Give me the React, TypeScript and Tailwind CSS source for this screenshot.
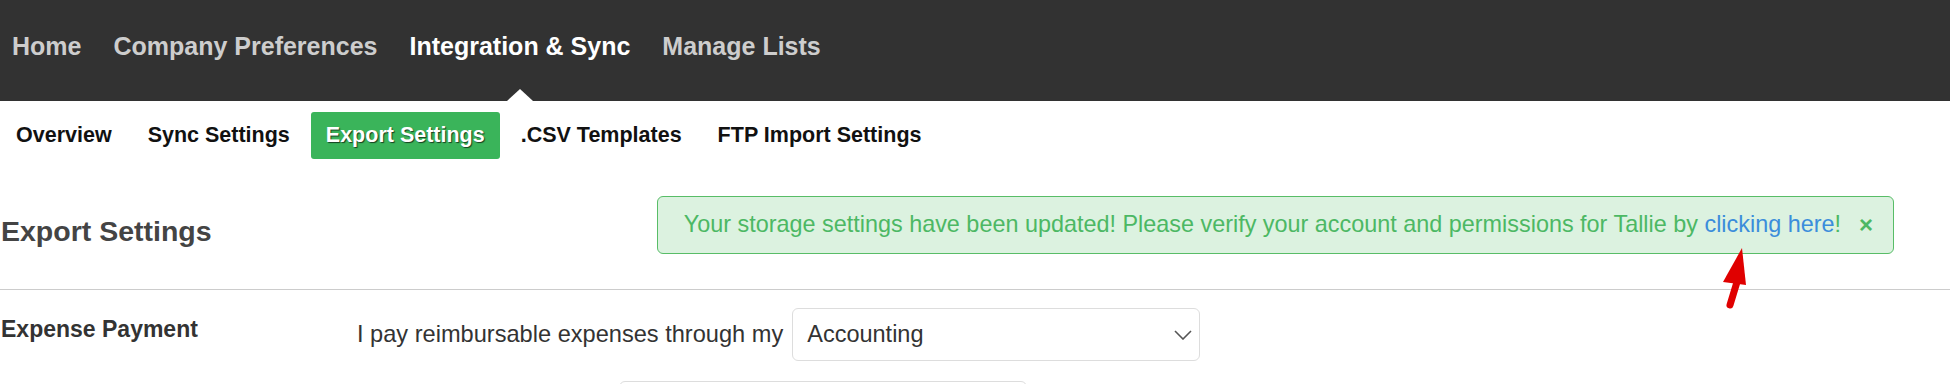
const topNav = ['Home', 'Company Preferences', 'Integration & Sync', 'Manage Lists'];
const subNav = ['Overview', 'Sync Settings', 'Export Settings', '.CSV Templates', 'FTP Import Settings'];

function App() {
  return (
    <div className="relative min-h-screen bg-white font-['Liberation_Sans',Arial,sans-serif]">
      {/* top navbar */}
      <nav className="h-[101px] bg-[#323232] flex items-stretch pl-[12px] gap-[32px]">
        {topNav.map((item) => {
          const active = item === 'Integration & Sync';
          return (
            <a
              key={item}
              href="#"
              className={
                active
                  ? 'relative flex items-center pb-[8px] text-[25px] font-bold text-white'
                  : 'relative flex items-center pb-[8px] text-[25px] font-bold text-[#cdcdcd]'
              }
            >
              {item}
              {active && (
                <svg
                  className="absolute bottom-0 left-1/2 -translate-x-1/2"
                  width="26"
                  height="12"
                  viewBox="0 0 26 12"
                >
                  <polygon points="0,12 13,0 26,12" fill="#ffffff" />
                </svg>
              )}
            </a>
          );
        })}
      </nav>

      {/* sub navbar */}
      <ul className="flex items-center gap-[6px] pl-[1px] mt-[11px]">
        {subNav.map((item) => {
          const active = item === 'Export Settings';
          return (
            <li key={item}>
              <a
                href="#"
                className={
                  active
                    ? 'flex items-center h-[47px] px-[15px] rounded-[3px] bg-[#3ab45a] text-white text-[21.5px] font-bold [text-shadow:1px_1px_1px_rgba(0,0,0,0.65)]'
                    : 'flex items-center h-[47px] px-[15px] text-[21.5px] font-bold text-[#111]'
                }
              >
                {item}
              </a>
            </li>
          );
        })}
      </ul>

      {/* page header */}
      <div className="flex items-center justify-between pt-[37px] pb-[35px] pr-[56px] border-b border-[#cccccc]">
        <h2 className="mt-[12px] pl-[1px] text-[28.5px] font-bold text-[#444]">Export Settings</h2>
        <div className="flex items-center h-[58px] pl-[26px] pr-[20px] rounded-[6px] border border-[#58bd67] bg-[#dcf2e0] text-[23.4px] text-[#4cb864]">
          <span>
            Your storage settings have been updated! Please verify your account and permissions for
            Tallie by <a href="#" className="text-[#3b8ddb]">clicking here</a>!
          </span>
          <span className="ml-[18px] text-[24px] font-bold leading-none text-[#4cb864]">×</span>
        </div>
      </div>

      {/* expense payment */}
      <section className="flex pt-[18px]">
        <h3 className="w-[357px] shrink-0 pl-[1px] pt-[4px] text-[23px] font-bold text-[#333]">
          Expense Payment
        </h3>
        <div className="flex items-center gap-[9px]">
          <span className="text-[23.6px] text-[#333]">I pay reimbursable expenses through my</span>
          <div className="flex items-center justify-between w-[408px] h-[53px] pl-[14px] pr-[7px] rounded-[6px] border border-[#dddddd] text-[23.5px] text-[#333]">
            Accounting
            <svg width="18" height="10" viewBox="0 0 18 10">
              <polyline points="1,1 9,9 17,1" fill="none" stroke="#555" strokeWidth="1.6" />
            </svg>
          </div>
        </div>
      </section>
      <div className="ml-[619px] mt-[20px] w-[408px] h-[53px] rounded-[6px] border border-[#dddddd]" />

      {/* red annotation arrow */}
      <svg
        className="absolute left-[1715px] top-[245px]"
        width="40"
        height="70"
        viewBox="0 0 40 70"
      >
        <polygon points="27,3 8,37 31,40" fill="#e00000" />
        <line x1="22" y1="37" x2="15" y2="60" stroke="#e00000" strokeWidth="7" strokeLinecap="round" />
      </svg>
    </div>
  );
}

export default App;
